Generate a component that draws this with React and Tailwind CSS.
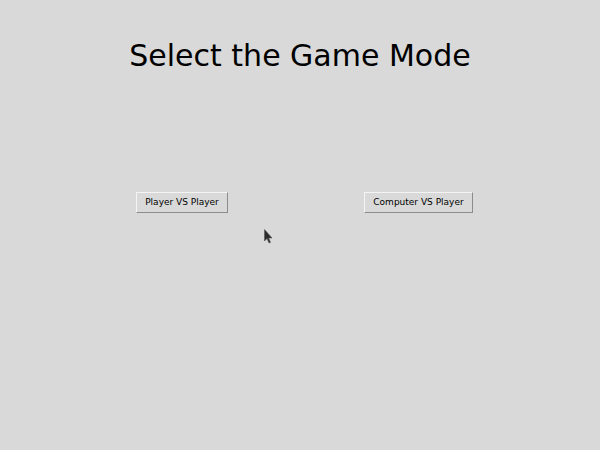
export default function App() {
  return (
    <div className="relative w-[600px] h-[450px] bg-[#d9d9d9] overflow-hidden" style={{ fontFamily: '"DejaVu Sans", sans-serif' }}>
      <div className="pt-[37px] text-center text-[30px] leading-[38px] text-black">Select the Game Mode</div>
      <div className="mt-[117px] flex pl-[136px] gap-[136px]">
        <button className="h-[21px] w-[92px] bg-[#d9d9d9] border border-t-[#f4f4f4] border-l-[#f4f4f4] border-r-[#8c8c8c] border-b-[#8c8c8c] text-[9px] leading-none text-black">Player VS Player</button>
        <button className="h-[21px] w-[109px] bg-[#d9d9d9] border border-t-[#f4f4f4] border-l-[#f4f4f4] border-r-[#8c8c8c] border-b-[#8c8c8c] text-[9px] leading-none text-black">Computer VS Player</button>
      </div>
      <svg className="absolute left-[264px] top-[229px]" width="10" height="16" viewBox="0 0 10 16">
        <path d="M0.5 0.5 L0.5 12 L3 9.5 L5 14 L6.5 13.3 L4.6 9 L8 9 Z" fill="#2b2b2b" stroke="#555" strokeWidth="0.6" />
      </svg>
    </div>
  );
}
